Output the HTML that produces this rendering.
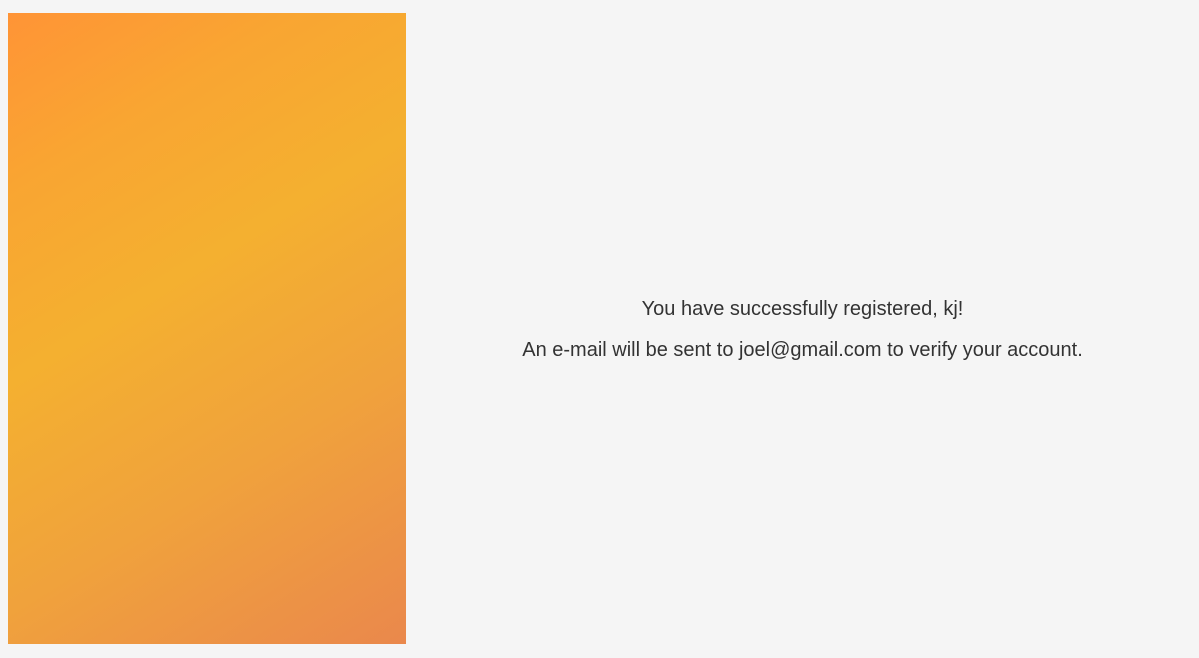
<!DOCTYPE html>
<html><head><style>
html,body{margin:0;padding:0;background:#f5f5f5;width:1199px;height:658px;overflow:hidden}
.panel{position:absolute;left:8px;top:13px;width:398px;height:631px;background:linear-gradient(148deg,#ff9436 0%,#f9a532 20%,#f4b030 42%,#f0a23c 68%,#ea884c 100%)}
.msg{position:absolute;left:406px;width:793px;text-align:center;font-family:"Liberation Sans",sans-serif;font-size:20px;color:#333}
</style></head><body>
<div class="panel"></div>
<div class="msg" style="top:298px">You have successfully registered, kj!</div>
<div class="msg" style="top:339px">An e-mail will be sent to joel@gmail.com to verify your account.</div>
</body></html>
